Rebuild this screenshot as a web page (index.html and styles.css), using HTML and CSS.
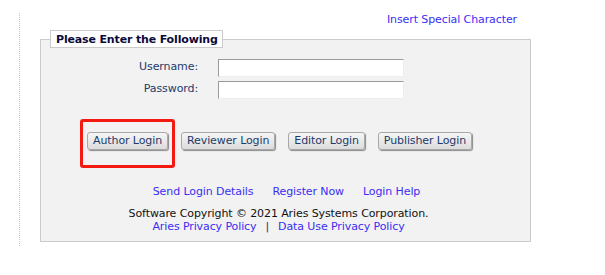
FILE: index.html
```html
<!DOCTYPE html>
<html>
<head>
<meta charset="utf-8">
<link rel="stylesheet" href="styles.css">
</head>
<body>
<div class="page">
  <div class="toolbar"><a class="link" href="#">Insert Special Character</a></div>
  <fieldset class="panel">
    <legend class="panel-title">Please Enter the Following</legend>
    <div class="fields">
      <label class="field-label" for="u">Username:</label>
      <input class="field-input" id="u" type="text">
      <label class="field-label" for="p">Password:</label>
      <input class="field-input" id="p" type="password">
    </div>
    <div class="buttons">
      <span class="highlight"><button class="btn">Author Login</button></span>
      <button class="btn">Reviewer Login</button>
      <button class="btn">Editor Login</button>
      <button class="btn">Publisher Login</button>
    </div>
    <div class="links">
      <a class="link" href="#">Send Login Details</a>
      <a class="link" href="#">Register Now</a>
      <a class="link" href="#">Login Help</a>
    </div>
    <div class="footer">
      <div class="copy">Software Copyright © 2021 Aries Systems Corporation.</div>
      <div class="privacy"><a class="link" href="#">Aries Privacy Policy</a><span class="sep">|</span><a class="link" href="#">Data Use Privacy Policy</a></div>
    </div>
  </fieldset>
</div>
</body>
</html>
```
FILE: styles.css
```css
* { box-sizing: border-box; }
html, body { margin: 0; background: #fff; }
body {
  font-family: "DejaVu Sans", Verdana, sans-serif;
  font-size: 11px;
  line-height: 14px;
  color: #111;
  letter-spacing: -0.1px;
}
.page {
  margin: 17px 0 0 19px;
  height: 233px;
  width: 520px;
  border-left: 1px dotted #c4c4c4;
  padding-left: 20px;
}
.link { color: #3a2ef2; text-decoration: none; }
.toolbar {
  margin-top: -4px;
  display: flex;
  justify-content: flex-end;
  padding-right: 14px;
  width: 491px;
}
.panel {
  margin: 3px 0 0 0;
  padding: 0 0 8px 0;
  width: 491px;
  border: 1px solid #cbcbcb;
  background: #f2f2f2;
}
.panel-title {
  margin-left: 9px;
  padding: 2px 4px 0 5px;
  line-height: 14px;
  height: 18px;
  background: #fff;
  border: 1px solid #cbcbcb;
  font-weight: bold;
  letter-spacing: -0.15px;
  color: #0a0a3a;
}
.fields {
  margin-top: 11px;
  display: grid;
  grid-template-columns: 157px 186px;
  grid-auto-rows: 18px;
  column-gap: 20px;
  row-gap: 4px;
}
.field-label {
  text-align: right;
  color: #1c3b6c;
  line-height: 14px;
  padding-top: 1px;
}
.field-input {
  height: 18px;
  width: 186px;
  margin: 0;
  padding: 0 2px;
  background: #fff;
  border: 1px solid;
  border-color: #9a9a9a #eeeeee #eeeeee #9a9a9a;
  font: inherit;
}
.buttons {
  margin-top: 33px;
  display: flex;
  gap: 13px;
  padding-left: 46px;
}
.highlight { position: relative; display: flex; }
.highlight::after {
  content: "";
  position: absolute;
  left: -7px; right: -7px; top: -13px; bottom: -18px;
  border: 3px solid #f41a12;
  border-radius: 3px;
}
.btn {
  height: 18px;
  margin: 0;
  padding: 0 5px;
  font: inherit;
  letter-spacing: -0.1px;
  line-height: 14px;
  color: #1c3b6c;
  background: linear-gradient(#f6f6f6, #dcdcdc);
  border: 1px solid #a8a8a8;
  border-radius: 3px;
  box-shadow: 1px 1px 1px #8a8a8a;
}
.links {
  margin-top: 35px;
  display: flex;
  justify-content: center;
  gap: 19px;
  padding-left: 2px;
}
.footer {
  margin-top: 8px;
  text-align: center;
  line-height: 13px;
  padding-right: 14px;
}
.sep { color: #1c3b6c; margin: 0 9px; }
```
